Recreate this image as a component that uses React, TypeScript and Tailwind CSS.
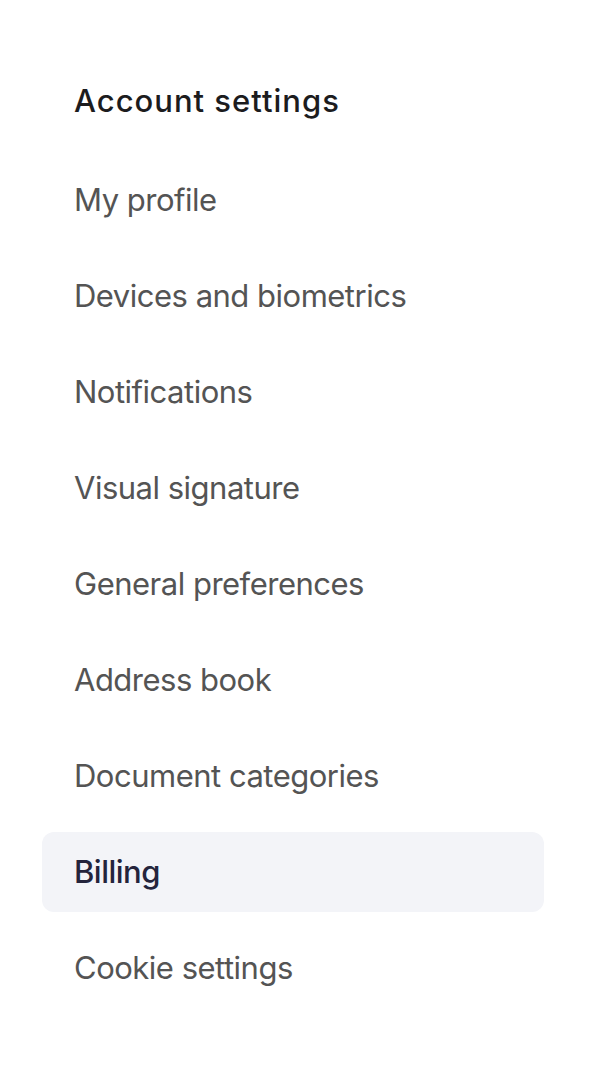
const ITEMS = [
  "My profile",
  "Devices and biometrics",
  "Notifications",
  "Visual signature",
  "General preferences",
  "Address book",
  "Document categories",
  "Billing",
  "Cookie settings",
];

const ACTIVE = "Billing";

export default function App() {
  return (
    <div className="min-h-[1070px] w-[590px] bg-white font-['Inter','Liberation_Sans',sans-serif]">
      <nav className="flex w-[544px] flex-col gap-4 pl-[42px] pt-[80px]">
        <h2 className="mb-[23px] pl-[32px] text-[31px] font-medium leading-[41px] tracking-[1px] text-[#1c1c1e]">
          Account settings
        </h2>
        {ITEMS.map((item) => (
          <a
            key={item}
            href="#"
            className={
              item === ACTIVE
                ? "flex h-20 items-center rounded-xl bg-[#f3f4f8] pl-[32px] text-[31px] font-medium tracking-[-0.5px] text-[#24243c]"
                : "flex h-20 items-center rounded-xl pl-[32px] text-[31px] tracking-[-0.5px] text-[#545454]"
            }
          >
            {item}
          </a>
        ))}
      </nav>
    </div>
  );
}
